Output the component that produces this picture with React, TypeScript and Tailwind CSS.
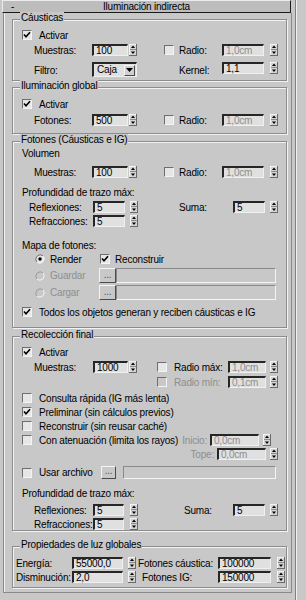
import React from "react";

function Spin() {
  return (
    <svg width="8" height="12" viewBox="0 0 8 12" className="block shrink-0">
      <rect x="0" y="0" width="8" height="12" fill="#d4d4d4" />
      <path d="M0 0.5H8M0.5 0V12" stroke="#f4f4f4" />
      <path d="M0 11.5H8M7.5 0V12" stroke="#6a6a6a" />
      <path d="M1 5.5H7" stroke="#8a8a8a" />
      <path d="M4 1.5L6 4H2Z" fill="#000" />
      <path d="M2 7.5H6L4 10Z" fill="#000" />
    </svg>
  );
}

function Field({ v, cls, dis = false }: { v: string; cls: string; dis?: boolean }) {
  return (
    <div
      className={`${cls} h-[12px] shrink-0 flex items-center pl-[2px] leading-none border-t-2 border-l-2 border-b border-r border-t-[#262626] border-l-[#262626] border-b-[#f0f0f0] border-r-[#f0f0f0] bg-[#e0e0e0] ${dis ? "text-[#8e8e8e]" : "text-black"}`}
    >
      {v}
    </div>
  );
}

function Cb({ on = false, dis = false }: { on?: boolean; dis?: boolean }) {
  return (
    <span
      className={`w-[10px] h-[10px] shrink-0 flex items-center justify-center border border-t-[#6e6e6e] border-l-[#6e6e6e] border-b-[#f4f4f4] border-r-[#f4f4f4] ${dis ? "bg-[#c8c8c8]" : "bg-[#e6e6e6]"}`}
    >
      {on && (
        <svg width="8" height="8" viewBox="0 0 8 8" className="block">
          <path d="M1 3.5L3 5.8L7 1.2" stroke="#000" strokeWidth="1.6" fill="none" />
        </svg>
      )}
    </span>
  );
}

function Rd({ on = false, dis = false }: { on?: boolean; dis?: boolean }) {
  return (
    <svg width="10" height="10" viewBox="0 0 10 10" className="block shrink-0">
      <circle cx="5" cy="5" r="4.3" fill={dis ? "#c8c8c8" : "#e6e6e6"} />
      <path d="M1.9 8.1A4.4 4.4 0 0 1 8.1 1.9" stroke={dis ? "#9a9a9a" : "#6e6e6e"} fill="none" />
      <path d="M8.1 1.9A4.4 4.4 0 0 1 1.9 8.1" stroke="#f4f4f4" fill="none" />
      {on && <circle cx="5" cy="5" r="1.7" fill="#000" />}
    </svg>
  );
}

function Dots({ cls }: { cls: string }) {
  return (
    <div
      className={`${cls} shrink-0 flex items-end justify-center pb-[2px] leading-none text-[#505050] border border-t-[#f4f4f4] border-l-[#f4f4f4] border-b-[#4a4a4a] border-r-[#4a4a4a]`}
    >
      ...
    </div>
  );
}

function Path({ cls }: { cls: string }) {
  return (
    <div className={`${cls} shrink-0 border border-t-[#8a8a8a] border-l-[#8a8a8a] border-b-[#f4f4f4] border-r-[#f4f4f4]`} />
  );
}

function Group({ title, cls, children }: { title: string; cls: string; children: React.ReactNode }) {
  return (
    <div
      className={`relative ml-[8px] w-[275px] border border-[#8c8c8c] shadow-[inset_1px_1px_0_#f2f2f2,1px_1px_0_#f2f2f2] ${cls}`}
    >
      <span className="absolute left-[7px] top-[-8px] px-[1px] bg-[#c8c8c8] leading-[12px] whitespace-nowrap">
        {title}
      </span>
      {children}
    </div>
  );
}

export default function App() {
  return (
    <div className="w-[306px] h-[600px] overflow-hidden bg-[#c8c8c8] flex font-['Liberation_Sans',Arial,sans-serif] text-[10px] tracking-[-0.2px] text-black">
      <div className="w-[293px] shrink-0 flex flex-col">
        {/* title bar */}
        <div className="ml-[2px] w-[289px] h-[13px] shrink-0 flex items-center bg-[#bdbdbd] border border-t-[#ececec] border-l-[#ececec] border-b-[#1a1a1a] border-r-[#1a1a1a] leading-none">
          <span className="ml-[8px] w-[8px]">-</span>
          <span className="flex-1 text-center pr-[16px]">Iluminación indirecta</span>
        </div>

        {/* body */}
        <div className="ml-[3px] w-[289px] shrink-0 flex flex-col border-l border-r border-b border-l-[#8a8a8a] border-r-[#8a8a8a] border-b-[#8a8a8a] shadow-[inset_1px_0_0_#f2f2f2] pb-[4px]">
          {/* Cáusticas */}
          <Group title="Cáusticas" cls="mt-[6px] pb-[3px]">
            <div className="flex items-center h-[12px] mt-[9px] pl-[9px]">
              <Cb on />
              <span className="ml-[7px]">Activar</span>
            </div>
            <div className="flex items-center h-[12px] mt-[3px] pl-[21px]">
              <span className="w-[58px] shrink-0">Muestras:</span>
              <Field v="100" cls="w-[36px]" />
              <span className="ml-[1px]"><Spin /></span>
              <span className="ml-[27px]"><Cb /></span>
              <span className="ml-[5px] w-[43px] shrink-0">Radio:</span>
              <Field v="1,0cm" cls="w-[42px]" dis />
              <span className="ml-[6px]"><Spin /></span>
            </div>
            <div className="flex items-start h-[15px] mt-[6px] pl-[21px]">
              <span className="w-[58px] shrink-0 mt-[1px]">Filtro:</span>
              <div className="w-[45px] h-[15px] shrink-0 flex items-center justify-between pl-[3px] pr-[1px] border-t-2 border-l-2 border-b border-r border-t-[#262626] border-l-[#262626] border-b-[#f0f0f0] border-r-[#f0f0f0] bg-[#e0e0e0] leading-none">
                <span>Caja</span>
                <span className="w-[11px] h-[11px] flex items-center justify-center bg-[#d0d0d0] border border-t-[#f4f4f4] border-l-[#f4f4f4] border-b-[#4a4a4a] border-r-[#4a4a4a]">
                  <svg width="7" height="4" viewBox="0 0 7 4" className="block">
                    <path d="M0 0H7L3.5 4Z" fill="#000" />
                  </svg>
                </span>
              </div>
              <span className="ml-[42px] w-[43px] shrink-0 mt-[1px]">Kernel:</span>
              <Field v="1,1" cls="w-[42px]" />
              <span className="ml-[6px]"><Spin /></span>
            </div>
          </Group>

          {/* Iluminación global */}
          <Group title="Iluminación global" cls="mt-[6px] pb-[7px]">
            <div className="flex items-center h-[12px] mt-[10px] pl-[9px]">
              <Cb on />
              <span className="ml-[7px]">Activar</span>
            </div>
            <div className="flex items-center h-[12px] mt-[4px] pl-[21px]">
              <span className="w-[58px] shrink-0">Fotones:</span>
              <Field v="500" cls="w-[36px]" />
              <span className="ml-[1px]"><Spin /></span>
              <span className="ml-[27px]"><Cb /></span>
              <span className="ml-[5px] w-[43px] shrink-0">Radio:</span>
              <Field v="1,0cm" cls="w-[42px]" dis />
              <span className="ml-[6px]"><Spin /></span>
            </div>
          </Group>

          {/* Fotones */}
          <Group title="Fotones (Cáusticas e IG)" cls="mt-[7px] pb-[9px]">
            <div className="flex items-center h-[12px] mt-[5px] pl-[9px]">Volumen</div>
            <div className="flex items-center h-[12px] mt-[7px] pl-[21px]">
              <span className="w-[58px] shrink-0">Muestras:</span>
              <Field v="100" cls="w-[36px]" />
              <span className="ml-[1px]"><Spin /></span>
              <span className="ml-[27px]"><Cb /></span>
              <span className="ml-[5px] w-[43px] shrink-0">Radio:</span>
              <Field v="1,0cm" cls="w-[42px]" dis />
              <span className="ml-[6px]"><Spin /></span>
            </div>
            <div className="flex items-center h-[12px] mt-[8px] pl-[9px]">Profundidad de trazo máx:</div>
            <div className="flex items-center h-[12px] mt-[3px] pl-[16px]">
              <span className="w-[64px] shrink-0">Reflexiones:</span>
              <Field v="5" cls="w-[32px]" />
              <span className="ml-[5px]"><Spin /></span>
              <span className="ml-[41px] w-[54px] shrink-0">Suma:</span>
              <Field v="5" cls="w-[32px]" />
              <span className="ml-[5px]"><Spin /></span>
            </div>
            <div className="flex items-center h-[12px] mt-[2px] pl-[16px]">
              <span className="w-[64px] shrink-0">Refracciones:</span>
              <Field v="5" cls="w-[32px]" />
              <span className="ml-[5px]"><Spin /></span>
            </div>
            <div className="flex items-center h-[12px] mt-[12px] pl-[9px]">Mapa de fotones:</div>
            <div className="flex items-center h-[12px] mt-[2px] pl-[22px]">
              <Rd on />
              <span className="ml-[5px] w-[50px] shrink-0">Render</span>
              <Cb on />
              <span className="ml-[5px]">Reconstruir</span>
            </div>
            <div className="flex items-center h-[15px] mt-[3px] pl-[22px]">
              <Rd dis />
              <span className="ml-[5px] w-[49px] shrink-0 text-[#8e8e8e]">Guardar</span>
              <Dots cls="w-[17px] h-[15px]" />
              <Path cls="w-[160px] h-[15px]" />
            </div>
            <div className="flex items-center h-[15px] mt-[2px] pl-[22px]">
              <Rd dis />
              <span className="ml-[5px] w-[49px] shrink-0 text-[#8e8e8e]">Cargar</span>
              <Dots cls="w-[17px] h-[15px]" />
              <Path cls="w-[160px] h-[15px]" />
            </div>
            <div className="flex items-center h-[12px] mt-[6px] pl-[9px]">
              <Cb on />
              <span className="ml-[7px] whitespace-nowrap">Todos los objetos generan y reciben cáusticas e IG</span>
            </div>
          </Group>

          {/* Recolección final */}
          <Group title="Recolección final" cls="mt-[8px] pb-0">
            <div className="flex items-center h-[12px] mt-[9px] pl-[9px]">
              <Cb on />
              <span className="ml-[7px]">Activar</span>
            </div>
            <div className="flex items-center h-[12px] mt-[3px] pl-[21px]">
              <span className="w-[59px] shrink-0">Muestras:</span>
              <Field v="1000" cls="w-[35px]" />
              <span className="ml-[1px]"><Spin /></span>
              <span className="ml-[20px]"><Cb /></span>
              <span className="ml-[7px] w-[54px] shrink-0">Radio máx:</span>
              <Field v="1,0cm" cls="w-[38px]" dis />
              <span className="ml-[4px]"><Spin /></span>
            </div>
            <div className="flex items-center h-[12px] mt-[3px] pl-[144px]">
              <Cb dis />
              <span className="ml-[7px] w-[54px] shrink-0 text-[#8e8e8e]">Radio mín:</span>
              <Field v="0,1cm" cls="w-[38px]" dis />
              <span className="ml-[4px]"><Spin /></span>
            </div>
            <div className="flex items-center h-[12px] mt-[4px] pl-[9px]">
              <Cb />
              <span className="ml-[7px] whitespace-nowrap">Consulta rápida (IG más lenta)</span>
            </div>
            <div className="flex items-center h-[12px] mt-[2px] pl-[9px]">
              <Cb on />
              <span className="ml-[7px] whitespace-nowrap">Preliminar (sin cálculos previos)</span>
            </div>
            <div className="flex items-center h-[12px] mt-[2px] pl-[9px]">
              <Cb />
              <span className="ml-[7px] whitespace-nowrap">Reconstruir (sin reusar caché)</span>
            </div>
            <div className="flex items-center h-[12px] mt-[2px] pl-[9px]">
              <Cb />
              <span className="ml-[7px] w-[138px] shrink-0 whitespace-nowrap">Con atenuación (limita los rayos)</span>
              <span className="w-[33px] shrink-0 text-right pr-[3px] text-[#8e8e8e]">Inicio:</span>
              <Field v="0,0cm" cls="w-[49px]" dis />
              <span className="ml-[4px]"><Spin /></span>
            </div>
            <div className="flex items-center h-[12px] mt-[2px] pl-[164px]">
              <span className="w-[40px] shrink-0 text-right pr-[3px] text-[#8e8e8e]">Tope:</span>
              <Field v="0,0cm" cls="w-[49px]" dis />
              <span className="ml-[4px]"><Spin /></span>
            </div>
            <div className="flex items-center h-[13px] mt-[6px] pl-[9px]">
              <Cb />
              <span className="ml-[7px] w-[62px] shrink-0">Usar archivo</span>
              <Dots cls="w-[15px] h-[13px]" />
              <span className="ml-[7px]"><Path cls="w-[153px] h-[13px]" /></span>
            </div>
            <div className="flex items-center h-[12px] mt-[8px] pl-[9px]">Profundidad de trazo máx:</div>
            <div className="flex items-center h-[12px] mt-[5px] pl-[21px]">
              <span className="w-[59px] shrink-0">Reflexiones:</span>
              <Field v="5" cls="w-[31px]" />
              <span className="ml-[6px]"><Spin /></span>
              <span className="ml-[46px] w-[49px] shrink-0">Suma:</span>
              <Field v="5" cls="w-[32px]" />
              <span className="ml-[5px]"><Spin /></span>
            </div>
            <div className="flex items-center h-[12px] mt-[2px] pl-[21px]">
              <span className="w-[59px] shrink-0 whitespace-nowrap">Refracciones:</span>
              <Field v="5" cls="w-[31px]" />
              <span className="ml-[6px]"><Spin /></span>
            </div>
          </Group>

          {/* Propiedades de luz globales */}
          <Group title="Propiedades de luz globales" cls="mt-[15px] pb-[4px]">
            <div className="flex items-center h-[12px] mt-[10px] pl-[3px]">
              <span className="w-[56px] shrink-0">Energía:</span>
              <Field v="55000,0" cls="w-[51px]" />
              <span className="ml-[5px]"><Spin /></span>
              <span className="ml-[2px] w-[80px] shrink-0 whitespace-nowrap">Fotones cáustica:</span>
              <Field v="100000" cls="w-[53px]" />
              <span className="ml-[6px]"><Spin /></span>
            </div>
            <div className="flex items-center h-[12px] mt-[2px] pl-[3px]">
              <span className="w-[56px] shrink-0 whitespace-nowrap">Disminución:</span>
              <Field v="2,0" cls="w-[51px]" />
              <span className="ml-[5px]"><Spin /></span>
              <span className="ml-[6px] w-[76px] shrink-0 whitespace-nowrap">Fotones IG:</span>
              <Field v="150000" cls="w-[53px]" />
              <span className="ml-[6px]"><Spin /></span>
            </div>
          </Group>
        </div>
      </div>
      {/* right strip */}
      <div className="flex-1 flex">
        <div className="ml-[2px] w-[1px] h-full bg-[#808080]" />
        <div className="w-[1px] h-full bg-[#f0f0f0]" />
      </div>
    </div>
  );
}
